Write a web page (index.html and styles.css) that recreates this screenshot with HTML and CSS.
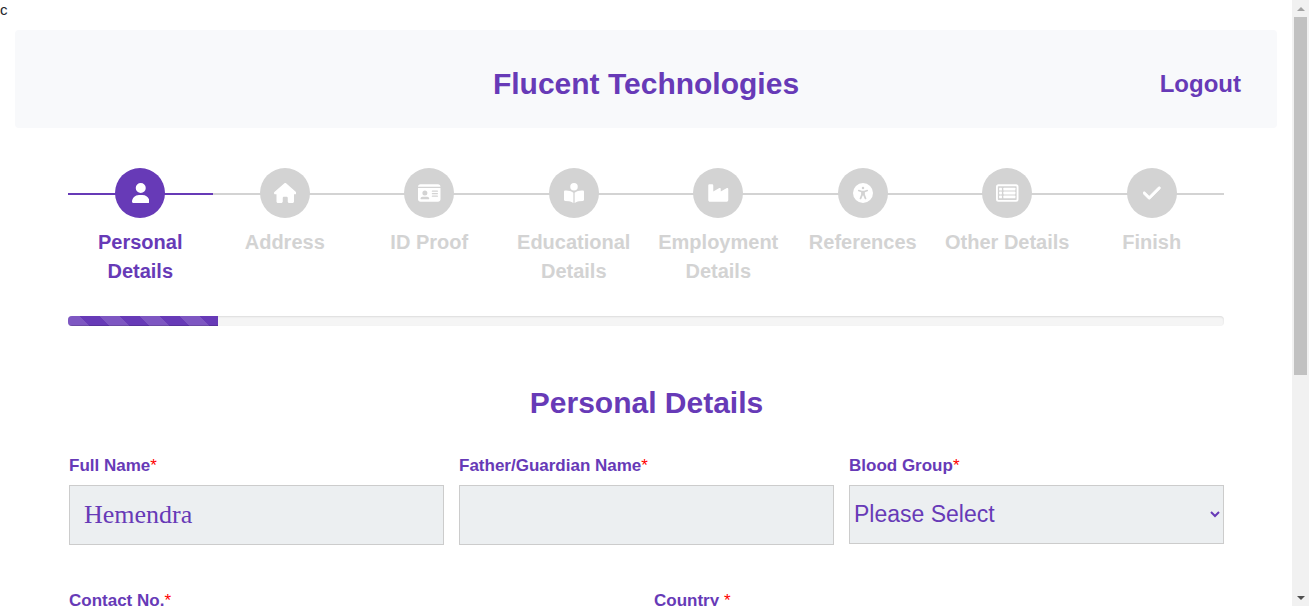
FILE: index.html
```html
<!DOCTYPE html>
<html lang="en">
<head>
<meta charset="utf-8">
<title>Flucent Technologies</title>
<link rel="stylesheet" href="styles.css">
</head>
<body>
<div class="page">
  <p class="note">c</p>
  <header class="topbar">
    <h1 class="brand">Flucent Technologies</h1>
    <a class="logout" href="#logout">Logout</a>
  </header>
  <main class="content">
    <ol class="steps">
      <li class="step active">
        <span class="badge"><svg viewBox="0 0 448 512"><path d="M224 256A128 128 0 1 0 224 0a128 128 0 1 0 0 256zm-45.700 48C79.800 304 0 383.800 0 482.300C0 498.700 13.300 512 29.700 512H418.300c16.400 0 29.700-13.300 29.700-29.700C448 383.800 368.200 304 269.700 304H178.300z"/></svg></span>
        <strong class="step-name">Personal Details</strong>
      </li>
      <li class="step">
        <span class="badge"><svg viewBox="0 0 576 512"><path d="M575.800 255.500c0 18-15 32.100-32 32.100h-32l.7 160.200c0 2.700-.2 5.400-.5 8.100V472c0 22.100-17.900 40-40 40H392c-22.100 0-40-17.900-40-40V384c0-17.700-14.300-32-32-32H256c-17.700 0-32 14.300-32 32v88c0 22.100-17.900 40-40 40H104c-22.100 0-40-17.900-40-40V287.600H32c-18 0-32-14-32-32.100c0-9 3-17 10-24L266.400 8c7-7 15-8 22-8s15 2 21 7L564.800 231.500c8 7 12 15 11 24z"/></svg></span>
        <strong class="step-name">Address</strong>
      </li>
      <li class="step">
        <span class="badge"><svg viewBox="0 0 576 512"><path fill-rule="evenodd" d="M0 96H576c0-35.300-28.700-64-64-64H64C28.700 32 0 60.700 0 96zm0 32V416c0 35.300 28.700 64 64 64H512c35.300 0 64-28.700 64-64V128H0zM64 405.300c0-29.500 23.900-53.300 53.300-53.300H234.700c29.500 0 53.300 23.900 53.300 53.300c0 5.900-4.800 10.700-10.700 10.700H74.700c-5.900 0-10.700-4.800-10.700-10.700zM176 192a64 64 0 1 1 0 128 64 64 0 1 1 0-128zm176 16c0-8.800 7.200-16 16-16H496c8.800 0 16 7.200 16 16s-7.200 16-16 16H368c-8.800 0-16-7.200-16-16zm0 64c0-8.800 7.200-16 16-16H496c8.800 0 16 7.200 16 16s-7.200 16-16 16H368c-8.800 0-16-7.200-16-16zm0 64c0-8.800 7.200-16 16-16H496c8.800 0 16 7.200 16 16s-7.200 16-16 16H368c-8.800 0-16-7.200-16-16z"/></svg></span>
        <strong class="step-name">ID Proof</strong>
      </li>
      <li class="step">
        <span class="badge"><svg viewBox="0 0 512 512"><path d="M160 96a96 96 0 1 1 192 0A96 96 0 1 1 160 96zm80 152V512l-48.400-24.200c-20.900-10.400-43.500-17-66.800-19.300l-96-9.600C12.500 457.200 0 443.500 0 427V224c0-17.700 14.300-32 32-32H62.300c63.600 0 125.600 19.600 177.700 56zm32 264V248c52.100-36.400 114.100-56 177.700-56H480c17.700 0 32 14.300 32 32V427c0 16.400-12.500 30.200-28.800 31.800l-96 9.600c-23.200 2.300-45.900 8.900-66.800 19.300L272 512z"/></svg></span>
        <strong class="step-name">Educational Details</strong>
      </li>
      <li class="step">
        <span class="badge"><svg viewBox="0 0 576 512"><path transform="translate(32)" d="M32 32C14.300 32 0 46.300 0 64V432c0 26.500 21.500 48 48 48H464c26.500 0 48-21.500 48-48V152.200c0-18.200-19.400-29.700-35.400-21.100L320 215.400V152.200c0-18.200-19.400-29.700-35.400-21.100L128 215.400V64c0-17.700-14.300-32-32-32H32z"/></svg></span>
        <strong class="step-name">Employment Details</strong>
      </li>
      <li class="step">
        <span class="badge"><svg viewBox="0 0 512 512"><circle cx="256" cy="256" r="256"/><g class="cutout"><circle cx="256" cy="128" r="32"/><path d="M154 172l74 28h56l74-28c28-9 38 27 16 38l-70 28v58l38 94c8 28-30 40-44 16l-34-86h-16l-34 86c-14 24-52 12-44-16l38-94v-58l-70-28c-22-11-12-47 16-38z"/></g></svg></span>
        <strong class="step-name">References</strong>
      </li>
      <li class="step">
        <span class="badge"><svg viewBox="0 0 576 512"><path fill-rule="evenodd" d="M64 32H512a64 64 0 0 1 64 64V416a64 64 0 0 1-64 64H64a64 64 0 0 1-64-64V96a64 64 0 0 1 64-64zm0 48a16 16 0 0 0-16 16V416a16 16 0 0 0 16 16H512a16 16 0 0 0 16-16V96a16 16 0 0 0-16-16H64z"/><rect x="80" y="120" width="72" height="72" rx="16"/><rect x="80" y="220" width="72" height="72" rx="16"/><rect x="80" y="320" width="72" height="72" rx="16"/><rect x="188" y="120" width="308" height="72" rx="16"/><rect x="188" y="220" width="308" height="72" rx="16"/><rect x="188" y="320" width="308" height="72" rx="16"/></svg></span>
        <strong class="step-name">Other Details</strong>
      </li>
      <li class="step">
        <span class="badge"><svg viewBox="0 0 448 512"><path stroke="#fff" stroke-width="16" d="M438.600 105.400c12.500 12.500 12.500 32.800 0 45.300l-256 256c-12.500 12.500-32.800 12.500-45.300 0l-128-128c-12.500-12.500-12.500-32.800 0-45.300s32.800-12.500 45.300 0L160 338.700 393.400 105.400c12.500-12.500 32.800-12.500 45.300 0z"/></svg></span>
        <strong class="step-name">Finish</strong>
      </li>
    </ol>
    <div class="progress"><div class="progress-bar" style="width: 13%"></div></div>
    <form class="form">
      <h2 class="form-title">Personal Details</h2>
      <div class="row three">
        <div class="field">
          <label for="name">Full Name<span class="required">*</span></label>
          <input class="control" id="name" type="text" value="Hemendra">
        </div>
        <div class="field">
          <label for="guardian">Father/Guardian Name<span class="required">*</span></label>
          <input class="control" id="guardian" type="text">
        </div>
        <div class="field">
          <label for="blood">Blood Group<span class="required">*</span></label>
          <select class="control select" id="blood"><option>Please Select</option></select>
        </div>
      </div>
      <div class="row two">
        <div class="field">
          <label for="contact">Contact No.<span class="required">*</span></label>
          <input class="control" id="contact" type="tel">
        </div>
        <div class="field">
          <label for="country">Country <span class="required">*</span></label>
          <input class="control" id="country" type="text">
        </div>
      </div>
    </form>
  </main>
</div>
<div class="scrollbar" aria-hidden="true">
  <span class="arrow up"></span>
  <span class="thumb"></span>
  <span class="arrow down"></span>
</div>
</body>
</html>
```
FILE: styles.css
```css
* { box-sizing: border-box; }

body {
  display: flex;
  height: 100vh;
  margin: 0;
  overflow: hidden;
  background: #fff;
  color: #212529;
  font: 15px/20px "Liberation Sans", Arial, sans-serif;
}

h1, h2, p, ol { margin: 0; padding: 0; }

.page { flex: 1; min-width: 0; overflow: hidden; }
.note { height: 30px; }

.topbar {
  display: grid;
  grid-template-columns: 1fr auto 1fr;
  align-items: center;
  margin: 0 15px;
  padding: 36px 36px 26px;
  border-radius: 4px;
  background: #f8f9fb;
}
.brand {
  grid-column: 2;
  color: #673ab7;
  font-size: 30px;
  line-height: 36px;
}
.logout {
  justify-self: end;
  color: #673ab7;
  font-size: 24px;
  font-weight: bold;
  line-height: 36px;
  text-decoration: none;
}

.content { padding: 40px 68px 0; }

.steps { display: grid; grid-template-columns: repeat(8, 1fr); list-style: none; }
.step {
  position: relative;
  display: flex;
  flex-direction: column;
  align-items: center;
  gap: 10px;
  color: lightgray;
  text-align: center;
}
.step::before {
  content: "";
  position: absolute;
  top: 25px;
  left: 0;
  width: 100%;
  height: 2px;
  background: currentColor;
}
.active { color: #673ab7; }
.badge {
  position: relative;
  display: grid;
  place-items: center;
  width: 50px;
  height: 50px;
  border-radius: 50%;
  background: currentColor;
}
.badge svg { height: 20px; fill: #fff; }
.badge .cutout { fill: lightgray; }
.step-name { padding: 0 10px; font-size: 20px; line-height: 29px; }

.progress {
  height: 10px;
  margin-top: 30px;
  overflow: hidden;
  border-radius: 4px;
  background: #f5f5f5;
  box-shadow: inset 0 1px 2px rgba(0, 0, 0, .1);
}
.progress-bar {
  height: 100%;
  background: linear-gradient(45deg, rgba(255, 255, 255, .15) 25%, transparent 25%, transparent 50%, rgba(255, 255, 255, .15) 50%, rgba(255, 255, 255, .15) 75%, transparent 75%) -8px 0 / 40px 40px #673ab7;
  box-shadow: inset 0 -1px 0 rgba(0, 0, 0, .15);
}

.form { padding: 59px 0 0 1px; }
.form-title {
  margin-bottom: 35px;
  color: #673ab7;
  font-size: 30px;
  line-height: 36px;
  text-align: center;
}
.row { display: grid; align-items: start; gap: 15px; margin-bottom: 46px; }
.three { grid-template-columns: repeat(3, 1fr); }
.two { grid-template-columns: repeat(2, 1fr); }
.field { display: flex; flex-direction: column; gap: 9px; }
.field label { color: #673ab7; font-size: 17px; font-weight: bold; line-height: 20px; }
.required { color: red; font-weight: normal; }
.control {
  width: 100%;
  height: 60px;
  padding: 0 14px;
  border: 1px solid #ccc;
  border-radius: 0;
  background: #eceff1;
  color: #673ab7;
  font: 26px "Liberation Serif", "Times New Roman", serif;
}
.select {
  height: 59px;
  padding: 0 1px 2px 0;
  font: 23px "Liberation Sans", Arial, sans-serif;
}

.scrollbar {
  display: flex;
  flex-direction: column;
  align-items: center;
  width: 17px;
  background: #f1f1f1;
}
.arrow { display: grid; place-items: center; width: 17px; height: 17px; }
.arrow::before { content: ""; border: 4px solid transparent; }
.up::before { border-top: 0; border-bottom-color: #a3a3a3; }
.down { margin-top: auto; }
.down::before { border-bottom: 0; border-top-color: #505050; }
.thumb { width: 13px; height: 59%; background: #c1c1c1; }
```
